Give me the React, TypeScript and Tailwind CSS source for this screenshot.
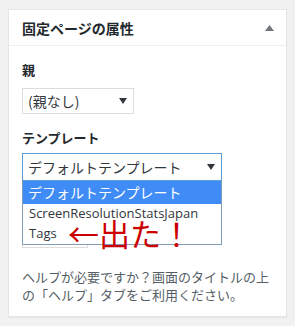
import React from "react";

const jp = { fontFamily: '"Noto Sans CJK JP", "Noto Sans", sans-serif' };

function Caret() {
  return (
    <svg width="8" height="6" viewBox="0 0 8 6" className="shrink-0">
      <path d="M0 0 L8 0 L4 6 Z" fill="#32373c" />
    </svg>
  );
}

export default function App() {
  return (
    <div className="min-h-[326px] w-[295px] bg-[#f1f1f1] pt-[9px] px-[8px]" style={jp}>
      <div className="bg-white border border-[#e5e5e5] shadow-[0_1px_1px_rgba(0,0,0,0.04)]">
        {/* header */}
        <div className="h-[36px] flex items-center justify-between pl-[13px] pr-[12px] border-b border-[#eeeeee]">
          <h2 className="text-[14px] font-bold text-[#23282d] leading-none">固定ページの属性</h2>
          <svg width="9" height="6" viewBox="0 0 9 6">
            <path d="M0 6 L9 6 L4.5 0 Z" fill="#72777c" />
          </svg>
        </div>

        {/* body */}
        <div className="px-[13px] pt-[15px] pb-[12px] text-[#23282d]">
          <p className="text-[13px] font-semibold leading-[18px]">親</p>
          <div className="mt-[9px] w-[112px] h-[26px] border border-[#dddddd] flex items-center justify-between pl-[5px] pr-[6px] text-[14px] text-[#32373c]">
            <span>(親なし)</span>
            <Caret />
          </div>

          <p className="mt-[15px] text-[13px] font-semibold leading-[18px] text-[#23282d]">テンプレート</p>

          <div className="relative mt-[6px]">
            <div className="w-[200px] h-[28px] border border-[#5b9dd9] flex items-center justify-between pl-[5px] pr-[6px] text-[14px] text-[#32373c]">
              <span>デフォルトテンプレート</span>
              <Caret />
            </div>

            {/* hidden field peeking out behind the open list */}
            <div className="mt-[9px] w-[66px] h-[58px] border border-[#dddddd]" />

            {/* open dropdown list */}
            <div className="absolute left-0 top-[28px] w-[200px] bg-white border border-[#7f9db9] border-t-0 text-[14px] text-[#32373c]">
              <div className="h-[23px] bg-[#3f8cf6] text-white flex items-center pl-[5px]">デフォルトテンプレート</div>
              <div className="h-[20px] flex items-center pl-[6px]" style={{ fontFamily: '"Open Sans", "Noto Sans", sans-serif', fontSize: 13 }}>
                ScreenResolutionStatsJapan
              </div>
              <div className="h-[20px] flex items-center pl-[6px]" style={{ fontFamily: '"Open Sans", "Noto Sans", sans-serif', fontSize: 13 }}>
                Tags
              </div>
            </div>

            {/* annotation */}
            <div className="absolute left-[46px] top-[64px] text-[#cc0000] text-[31px] leading-none font-normal whitespace-nowrap">
              ←出た！
            </div>
          </div>

          <p className="mt-[20px] text-[13px] leading-[18px] text-[#555d66]">
            ヘルプが必要ですか？画面のタイトルの上の「ヘルプ」タブをご利用ください。
          </p>
        </div>
      </div>
    </div>
  );
}
